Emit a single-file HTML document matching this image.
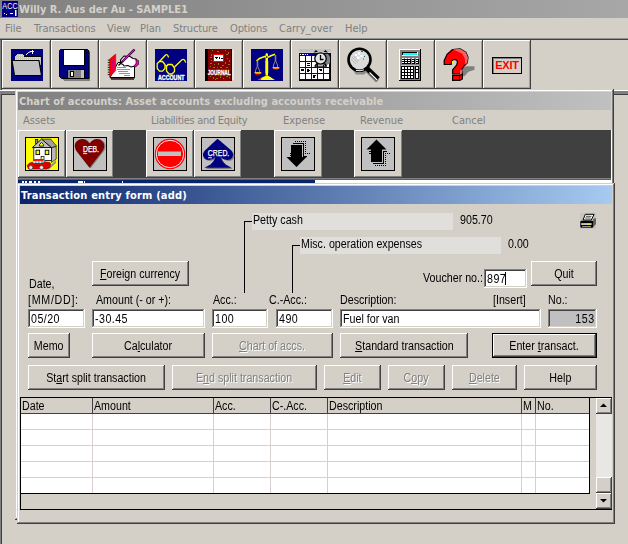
<!DOCTYPE html>
<html><head><meta charset="utf-8"><title>Willy R. Aus der Au - SAMPLE1</title>
<style>
html,body{margin:0;padding:0;}
body{width:628px;height:544px;overflow:hidden;background:#d4d0c8;position:relative;font-family:"Liberation Sans",sans-serif;font-size:12px;color:#000;}
.a{position:absolute;box-sizing:border-box;}
.t{position:absolute;white-space:nowrap;line-height:14px;}
.t.m{transform:scaleX(.89);transform-origin:0 0;}
.c{display:inline-block;transform:scaleX(.89);transform-origin:50% 50%;}
.il{display:inline-block;transform:scaleX(.89);transform-origin:0 50%;}
.tah{font-family:"DejaVu Sans Condensed","Liberation Sans",sans-serif;font-size:11px;}
.btn{position:absolute;box-sizing:border-box;background:#d4d0c8;box-shadow:inset -1px -1px #404040,inset 1px 1px #fff,inset -2px -2px #808080,inset 2px 2px #d4d0c8;text-align:center;white-space:nowrap;}
.btn span.l{position:absolute;left:0;right:0;text-align:center;}
.dis{color:#808080;text-shadow:1px 1px #fff;}
.inp{position:absolute;box-sizing:border-box;background:#fff;box-shadow:inset -1px -1px #fff,inset 1px 1px #808080,inset -2px -2px #d4d0c8,inset 2px 2px #404040;white-space:nowrap;}
.win{position:absolute;box-sizing:border-box;background:#d4d0c8;box-shadow:inset -1px -1px #404040,inset 1px 1px #d4d0c8,inset -2px -2px #808080,inset 2px 2px #fff;}
.tb{position:absolute;box-sizing:border-box;background:#d4d0c8;box-shadow:inset -1px -1px #404040,inset 1px 1px #fff,inset -2px -2px #a0a0a0;}
u{text-decoration:underline;}
</style></head>
<body>
<div class="a" style="left:0px;top:0px;width:628px;height:18px;background:linear-gradient(90deg,#808080,#a7a7a7);"></div>
<svg class="a" style="left:2px;top:1px" width="16" height="16" viewBox="0 0 16 16"><rect width="16" height="16" fill="#000080"/><text x="0.3" y="8" font-family="Liberation Sans,sans-serif" font-size="9.5" fill="#fff" textLength="15.4" lengthAdjust="spacingAndGlyphs">ACC</text><rect x="2" y="12" width="1" height="1" fill="#fff"/><rect x="4" y="13" width="1" height="1" fill="#fff"/><rect x="8" y="12" width="3" height="1" fill="#fff"/><rect x="13" y="9" width="1.5" height="6" fill="#fff"/></svg>
<div class="t tah" style="left:19px;top:3px;color:#d4d0c8;font-weight:bold;letter-spacing:-0.03px;">Willy R. Aus der Au - SAMPLE1</div>
<div class="t tah" style="left:5px;top:22px;color:#808080;">File</div>
<div class="t tah" style="left:34px;top:22px;color:#808080;">Transactions</div>
<div class="t tah" style="left:107px;top:22px;color:#808080;">View</div>
<div class="t tah" style="left:140px;top:22px;color:#808080;">Plan</div>
<div class="t tah" style="left:173px;top:22px;color:#808080;letter-spacing:-0.15px;">Structure</div>
<div class="t tah" style="left:230px;top:22px;color:#808080;letter-spacing:-0.15px;">Options</div>
<div class="t tah" style="left:279px;top:22px;color:#808080;">Carry_over</div>
<div class="t tah" style="left:345px;top:22px;color:#808080;">Help</div>
<div class="a" style="left:0px;top:38px;width:628px;height:1px;background:#909090;"></div>
<div class="a" style="left:0px;top:39px;width:628px;height:1px;background:#404040;"></div>
<div class="a" style="left:0px;top:40px;width:1px;height:50px;background:#808080;"></div>
<div class="a" style="left:1px;top:40px;width:1px;height:50px;background:#404040;"></div>
<div class="tb" style="left:2px;top:40px;width:49px;height:49px;"></div>
<div class="tb" style="left:51px;top:40px;width:48px;height:49px;"></div>
<div class="tb" style="left:99px;top:40px;width:48px;height:49px;"></div>
<div class="tb" style="left:147px;top:40px;width:48px;height:49px;"></div>
<div class="tb" style="left:195px;top:40px;width:48px;height:49px;"></div>
<div class="tb" style="left:243px;top:40px;width:48px;height:49px;"></div>
<div class="tb" style="left:291px;top:40px;width:48px;height:49px;"></div>
<div class="tb" style="left:339px;top:40px;width:48px;height:49px;"></div>
<div class="tb" style="left:387px;top:40px;width:48px;height:49px;"></div>
<div class="tb" style="left:435px;top:40px;width:48px;height:49px;"></div>
<div class="tb" style="left:483px;top:40px;width:48px;height:49px;"></div>
<div class="a" style="left:0px;top:90px;width:628px;height:1px;background:#fff;"></div>
<div class="a" style="left:0px;top:91px;width:628px;height:3px;background:#808080;"></div>
<div class="a" style="left:0px;top:94px;width:628px;height:1px;background:#404040;"></div>
<div class="a" style="left:0px;top:94px;width:1px;height:450px;background:#808080;"></div>
<div class="a" style="left:1px;top:94px;width:1px;height:450px;background:#404040;"></div>
<svg class="a" style="left:11px;top:49px" width="32" height="32" viewBox="0 0 32 32" shape-rendering="crispEdges"><defs><pattern id="yd" width="2" height="2" patternUnits="userSpaceOnUse"><rect width="2" height="2" fill="#c8c8b8"/><rect width="1" height="1" fill="#ffff00"/></pattern></defs><rect width="32" height="32" fill="#000080"/><path d="M4 12V7l2-2h5l2 2h17v9h-2v-5z" fill="url(#yd)"/><path d="M13 7h17v9" fill="none" stroke="#000" stroke-width="1"/><path d="M1 11.5h27l2.5 15h-27z" fill="#c0c0c0" stroke="#000" stroke-width="1.2" shape-rendering="auto"/><path d="M15 6q2-3 5-3.5" fill="none" stroke="#fff" stroke-width="1" shape-rendering="auto"/><path d="M19 2.5h4M21 1v3.5" stroke="#fff" stroke-width="1"/></svg>
<svg class="a" style="left:59px;top:49px" width="33" height="33" viewBox="0 0 33 33" shape-rendering="crispEdges"><path d="M3 3h28v29H5l-2-2z" fill="#808080"/><path d="M1.5 0.500h27l1.500 1.500v27.500h-27.500l-2-2v-26z" fill="#000080" stroke="#000" stroke-width="1" shape-rendering="auto"/><rect x="4" y="0" width="22" height="17" fill="#000"/><rect x="5" y="1" width="20" height="15" fill="#fff"/><rect x="8" y="20" width="18" height="10" fill="#000"/><rect x="9" y="21" width="16" height="8" fill="#808080"/><rect x="11" y="22" width="4" height="6" fill="#000"/><rect x="12" y="23" width="2" height="4" fill="#fff"/><rect x="22" y="21" width="3" height="8" fill="#c0c0c0"/><rect x="27" y="3" width="1" height="2" fill="#000"/></svg>
<svg class="a" style="left:102px;top:46px" width="40" height="38" viewBox="0 0 40 38"><path d="M8 31.500h24.500v-11l-7-4h-9.500z" fill="#fff" stroke="#000" stroke-width="1"/><path d="M9 33.200h23" stroke="#800000" stroke-width="1.200"/><path d="M8.500 31.800h24" stroke="#000" stroke-width="1.600"/><g stroke="#909090" stroke-width="1" shape-rendering="crispEdges"><path d="M15 21.500h9M15 23.500h13M16 25.500h10M17 27.500h11M22 29.500h6"/></g><path d="M7.700 13l6-5v16.500l-6 6.500z" fill="#ff0000" stroke="#c00020" stroke-width="0.600"/><path d="M9.500 14.500l3-2.500v11l-3 3.500z" fill="#c000a0" opacity="0.650"/><g fill="none" stroke="#000" stroke-width="0.900"><path d="M7.800 14.200h-2M7.800 16.600h-2M7.800 19h-2M7.800 21.400h-2M7.800 23.800h-2M7.800 26.200h-2M7.800 28.600h-2"/></g><path d="M18.500 14l3.500-4 6 .5 3 2 3 .5 1 3.500-2 3.500-4 1-3-1.500-4 .5-1-1.500-2.500-1z" fill="#fff" stroke="#000" stroke-width="1.100"/><path d="M34 13.500l2.500 1v4l-3 2.500-2-.5 2.500-3z" fill="#ff00c0" stroke="#000" stroke-width="0.600"/><path d="M32.500 3.500L20 16" stroke="#000" stroke-width="2.400"/><path d="M32.300 3.700L20.500 15.500" stroke="#ff00ff" stroke-width="1.200"/><path d="M20.300 15.700L16.500 19.500" stroke="#000" stroke-width="1.300"/></svg>
<svg class="a" style="left:155px;top:49px" width="32" height="32" viewBox="0 0 32 32"><rect width="32" height="32" fill="#000080"/><g fill="none" stroke="#ffff00" stroke-width="1.300"><path d="M4.500 12.500h3l2.500 3v4l-2.500 2.700h-3l-2.300-2.700v-5z"/><path d="M13 15.500h4l2.500 3.500v3.500l-2.500 2.500h-3l-2.500-3v-4.500z"/><path d="M10 16l1.500 1"/><path d="M4.500 12.500l6-6.500q2-1.500 3 2.500"/><path d="M19.500 18l7.500-7.300q2.500-1.500 3.700 3"/></g><text x="3" y="30.500" font-family="Liberation Sans,sans-serif" font-weight="bold" font-size="7" fill="#fff" stroke="#fff" stroke-width="0.35" textLength="26.500" lengthAdjust="spacingAndGlyphs">ACCOUNT</text></svg>
<svg class="a" style="left:205px;top:49px" width="30" height="32" viewBox="0 0 30 32" shape-rendering="crispEdges"><rect x="27" y="1" width="2" height="30" fill="#e8e8e8"/><rect x="0" y="0" width="27" height="32" fill="#000"/><rect x="3" y="0" width="23" height="32" fill="#800000"/><g fill="#808000"><rect x="7" y="1" width="1" height="1"/><rect x="12" y="2" width="2" height="1"/><rect x="20" y="1" width="1" height="1"/><rect x="23" y="3" width="1" height="2"/><rect x="6" y="5" width="1" height="2"/><rect x="21" y="5" width="2" height="1"/><rect x="5" y="8" width="2" height="1"/><rect x="22" y="9" width="1" height="1"/><rect x="6" y="11" width="1" height="1"/><rect x="24" y="11" width="1" height="2"/><rect x="5" y="14" width="2" height="1"/><rect x="9" y="15" width="1" height="1"/><rect x="13" y="14" width="1" height="2"/><rect x="17" y="16" width="2" height="1"/><rect x="20" y="13" width="1" height="2"/><rect x="23" y="15" width="2" height="1"/><rect x="5" y="17" width="1" height="1"/><rect x="8" y="18" width="2" height="1"/><rect x="12" y="18" width="1" height="1"/><rect x="15" y="18" width="2" height="1"/><rect x="21" y="18" width="2" height="1"/><rect x="5" y="27" width="1" height="1"/><rect x="8" y="28" width="1" height="2"/><rect x="11" y="29" width="2" height="1"/><rect x="15" y="27" width="1" height="2"/><rect x="18" y="29" width="1" height="1"/><rect x="21" y="27" width="2" height="1"/><rect x="24" y="28" width="1" height="1"/><rect x="10" y="30" width="1" height="1"/></g><rect x="8" y="5" width="11" height="8" fill="#ff0000"/><rect x="9" y="6" width="9" height="6" fill="#fff"/><rect x="10" y="8" width="3" height="1" fill="#000"/><rect x="14" y="8" width="1" height="2" fill="#000"/><rect x="11" y="9" width="1" height="1" fill="#000"/><rect x="16" y="9" width="2" height="1" fill="#000"/><text x="2.700" y="26" font-family="Liberation Sans,sans-serif" font-weight="bold" font-size="7.500" fill="#fff" stroke="#fff" stroke-width="0.35" textLength="23" lengthAdjust="spacingAndGlyphs" shape-rendering="auto">JOURNAL</text></svg>
<svg class="a" style="left:251px;top:49px" width="32" height="32" viewBox="0 0 32 32"><rect width="32" height="32" fill="#000080"/><path d="M14.500 5l1.200-1 1.300 1v21.500h-2.500z" fill="#ffff00"/><path d="M14 13h3.500M14 15h3.500M14 17h3.500M14 19h3.500M14 21h3.500M14 23h3.500" stroke="#ffff00" stroke-width="0.900"/><path d="M5.500 12l3-2.500 5-2 4 .5 3-1.500 3.500-1.300" fill="none" stroke="#ffff00" stroke-width="1.500"/><path d="M6.200 11.500v6l-1.700 4v2M6.800 11.500v6l1.700 4v2" fill="none" stroke="#a0a0a0" stroke-width="0.800"/><path d="M24.200 6v6l-1.700 4v2.500M24.800 6v6l1.700 4v2.500" fill="none" stroke="#a0a0a0" stroke-width="0.800"/><path d="M3 23.300h7.500l-2 2.500h-3.500z" fill="#ff0000"/><path d="M3.300 23.300h7v1.200h-6z" fill="#ffff00"/><path d="M21 18.300h7.500l-2 2.500h-3.500z" fill="#ff0000"/><path d="M21.300 18.300h7v1.200h-6z" fill="#ffff00"/><path d="M7 31l4-2.500 4.500-2h1.500l3 2 4 2.500z" fill="#ffff00"/><path d="M7 31l3.500-2-0.500 1.800z" fill="#ff0000"/><path d="M18.500 28l1.500 1.500 1 .3" stroke="#fff" stroke-width="1" fill="none"/><rect x="15.300" y="7" width="1" height="2" fill="#000"/></svg>
<svg class="a" style="left:299px;top:49px" width="33" height="32" viewBox="0 0 33 32" shape-rendering="crispEdges"><rect x="0" y="0" width="32" height="3" fill="#c0c0c0"/><rect x="0" y="4" width="32" height="28" fill="#000"/><rect x="0" y="4" width="31" height="27" fill="#0000a0"/><g fill="#fff"><rect x="1" y="5" width="1" height="1"/><rect x="3" y="5" width="2" height="1"/><rect x="6" y="5" width="1" height="1"/><rect x="8" y="5" width="1" height="1"/><rect x="1" y="7" width="5" height="5"/><rect x="7" y="7" width="5" height="5"/><rect x="13" y="7" width="5" height="5"/><rect x="1" y="13" width="5" height="5"/><rect x="7" y="13" width="5" height="5"/><rect x="13" y="13" width="5" height="5"/><rect x="19" y="13" width="5" height="5"/><rect x="25" y="13" width="5" height="5"/><rect x="1" y="19" width="5" height="5"/><rect x="7" y="19" width="5" height="5"/><rect x="13" y="19" width="5" height="5"/><rect x="19" y="19" width="5" height="5"/><rect x="25" y="19" width="5" height="5"/><rect x="1" y="25" width="5" height="5"/><rect x="7" y="25" width="5" height="5"/><rect x="13" y="25" width="5" height="5"/><rect x="19" y="25" width="5" height="5"/><rect x="25" y="25" width="5" height="5"/></g><g fill="#000"><rect x="8" y="14" width="3" height="1"/><rect x="8" y="16" width="3" height="1"/><rect x="2" y="20" width="3" height="2"/><rect x="8" y="20" width="2" height="3"/><rect x="10" y="21" width="1" height="1"/><rect x="20" y="20" width="3" height="1"/><rect x="21" y="21" width="2" height="1"/><rect x="14" y="26" width="3" height="1"/><rect x="14" y="27" width="2" height="2"/></g><g shape-rendering="auto"><path d="M25 5l4 0 2 3v6l-3 2h-4z" fill="#808080"/><path d="M14.500 3.500l2.500-2.500 2 2zM29 3.500l-2.500-2.500-2 2z" fill="#000"/><path d="M16 17.500l2-3M27.500 17.500l-2-3" stroke="#000" stroke-width="1.500"/><path d="M15.500 17.200h12" stroke="#000" stroke-width="1"/><circle cx="21.500" cy="9.500" r="5.700" fill="#e4e4e4" stroke="#000" stroke-width="1.300"/><path d="M21.500 6v4.500h3" fill="none" stroke="#000" stroke-width="1.300"/><rect x="20.500" y="4" width="1" height="1" fill="#f00"/><rect x="22.500" y="4" width="1" height="1" fill="#f00"/></g></svg>
<svg class="a" style="left:344px;top:46px" width="40" height="38" viewBox="0 0 40 38"><path d="M6 20q7 7.500 16 3l2 2-4 3.500h-8z" fill="#808080" opacity="0.850"/><path d="M23 24.500l10.500 10.500" stroke="#808080" stroke-width="4"/><path d="M21.500 21l12.500 12" stroke="#000" stroke-width="5"/><path d="M25.500 26.500l7.500 7.500" stroke="#fff" stroke-width="1.300"/><circle cx="15.500" cy="13.700" r="11" fill="#dcdcdc" stroke="#000" stroke-width="2.600"/><path d="M8 11l6 6M7 13l5 5M9.500 10l5 5" stroke="#b0b0b0" stroke-width="0.800"/><g fill="#fff"><rect x="11" y="8" width="2" height="2"/><rect x="14" y="6.500" width="2" height="2"/><rect x="13" y="10.500" width="2.500" height="2.500"/><rect x="16.500" y="9" width="2" height="2"/></g><rect x="17" y="5" width="2" height="1" fill="#008080"/><rect x="20" y="10" width="1" height="1" fill="#008080"/><rect x="19" y="12.500" width="1" height="1" fill="#008080"/><path d="M12 24.300q4 1.200 8-.5" stroke="#fff" stroke-width="1" fill="none"/></svg>
<svg class="a" style="left:399px;top:49px" width="23" height="32" viewBox="0 0 23 32" shape-rendering="crispEdges"><rect x="0" y="0" width="22" height="32" fill="#000"/><rect x="0" y="0" width="21" height="31" fill="#fff"/><rect x="1" y="1" width="20" height="30" fill="#808080"/><rect x="3" y="3" width="16" height="4" fill="#fff"/><rect x="3" y="3" width="15" height="3" fill="#000"/><rect x="4" y="4" width="14" height="2" fill="#00ffff"/><g fill="#000"><rect x="3" y="10" width="3" height="5"/><rect x="6" y="10" width="3" height="5"/><rect x="9" y="10" width="3" height="5"/><rect x="13" y="10" width="3" height="5"/><rect x="17" y="10" width="3" height="5"/></g><g fill="#fff"><rect x="3" y="9" width="2" height="1"/><rect x="6" y="9" width="2" height="1"/><rect x="9" y="9" width="2" height="1"/><rect x="13" y="9" width="2" height="1"/><rect x="17" y="9" width="2" height="1"/><rect x="3" y="11" width="2" height="1"/><rect x="6" y="11" width="2" height="1"/><rect x="9" y="11" width="2" height="1"/><rect x="13" y="11" width="2" height="1"/><rect x="17" y="11" width="2" height="1"/><rect x="3" y="13" width="2" height="1"/><rect x="6" y="13" width="2" height="1"/><rect x="9" y="13" width="2" height="1"/><rect x="13" y="13" width="2" height="1"/><rect x="17" y="13" width="2" height="1"/></g><rect x="2" y="16" width="18" height="1" fill="#c0c0c0"/><rect x="2" y="17" width="13" height="13" fill="#000"/><rect x="16" y="17" width="4" height="13" fill="#000"/><g fill="#fff"><rect x="3" y="18" width="2" height="2"/><rect x="6" y="18" width="2" height="2"/><rect x="9" y="18" width="2" height="2"/><rect x="12" y="18" width="2" height="2"/><rect x="3" y="21" width="2" height="2"/><rect x="6" y="21" width="2" height="2"/><rect x="9" y="21" width="2" height="2"/><rect x="12" y="21" width="2" height="2"/><rect x="3" y="24" width="2" height="2"/><rect x="6" y="24" width="2" height="2"/><rect x="9" y="24" width="2" height="2"/><rect x="12" y="24" width="2" height="2"/><rect x="3" y="27" width="2" height="2"/><rect x="6" y="27" width="2" height="2"/><rect x="9" y="27" width="2" height="2"/><rect x="12" y="27" width="2" height="2"/><rect x="17" y="18" width="2" height="2"/><rect x="17" y="21" width="2" height="2"/><rect x="17" y="24" width="2" height="5"/></g></svg>
<svg class="a" style="left:440px;top:46px" width="40" height="38" viewBox="0 0 40 38"><path d="M23.500 21l3-.7h8v3.500l-6 2-4 4.500h-2.500v-5z" fill="#808080"/><path d="M4.200 18.500v-4l2.800-6 5.600-5 7.400-.7 5.900 3.500 2.100 4.900-.7 5.600-3.500 3.500-2.100 3.500.7 3.500-3.500.7h-6.300v-4.200l4.200-4.900.7-3.500-2.100-2.100-2.800.7-1.400 3.500v1z" fill="#ff0000" stroke="#000" stroke-width="1.200" stroke-linejoin="round"/><path d="M12.600 3.500l7.400-.7 5.900 3.500 2.100 4.900-.7 5.600-2 2-.5-6-2.500-5-5-2.500z" fill="#ff8080" opacity="0.750"/><path d="M12.600 29.400h7l2.800-1.400v5l-2.800 1.400h-7z" fill="#ff0000" stroke="#000" stroke-width="1.200" stroke-linejoin="round"/><path d="M19.600 29.400v5" stroke="#000" stroke-width="0.800"/><path d="M20 24.500l2.200-1v4l-2.200 1z" fill="#ff6060"/><rect x="12" y="15" width="1.500" height="2" fill="#ffff00"/></svg>
<div class="a" style="left:492px;top:57px;width:30px;height:17px;border:1px solid #000;box-shadow:inset 1px 1px #808080;"></div>
<div class="t" style="left:492px;top:57px;width:30px;height:17px;line-height:17px;text-align:center;color:#ff0000;font-weight:bold;font-size:11px;letter-spacing:-0.2px;">EXIT</div>

<div class="win" style="left:15px;top:89px;width:599px;height:431px;"></div>
<div class="a" style="left:18px;top:92px;width:593px;height:18px;background:linear-gradient(90deg,#808080,#c0c0c0);"></div>
<div class="t tah" style="left:19px;top:95px;color:#d4d0c8;font-weight:bold;letter-spacing:0.03px;">Chart of accounts: Asset accounts excluding accounts receivable</div>
<div class="t tah" style="left:23px;top:114px;color:#808080;">Assets</div>
<div class="t tah" style="left:151px;top:114px;color:#808080;letter-spacing:-0.3px;">Liabilities and Equity</div>
<div class="t tah" style="left:283px;top:114px;color:#808080;">Expense</div>
<div class="t tah" style="left:360px;top:114px;color:#808080;">Revenue</div>
<div class="t tah" style="left:452px;top:114px;color:#808080;">Cancel</div>
<div class="a" style="left:18px;top:130px;width:593px;height:49px;background:#404040;"></div>
<div class="btn" style="left:18px;top:130px;width:48px;height:48px;"></div>
<div class="btn" style="left:66px;top:130px;width:48px;height:48px;"></div>
<div class="btn" style="left:146px;top:130px;width:48px;height:48px;"></div>
<div class="btn" style="left:194px;top:130px;width:48px;height:48px;"></div>
<div class="btn" style="left:274px;top:130px;width:49px;height:48px;"></div>
<div class="btn" style="left:354px;top:130px;width:49px;height:48px;"></div>
<svg class="a" style="left:25px;top:137px" width="34" height="34" viewBox="0 0 34 34"><rect x="0.500" y="0.500" width="33" height="33" fill="#ffff00" stroke="#000" stroke-width="1" shape-rendering="crispEdges"/><path d="M16.500 2.100h9.200l5.900 7-5.200 1.500z" fill="#a0a0a0" stroke="#000" stroke-width="0.600"/><rect x="10.600" y="2.500" width="2.200" height="4" fill="#909090" stroke="#000" stroke-width="0.700"/><path d="M26.400 11l4.800-1.500v12.500l-4.800 3.500z" fill="#b8b8b8" stroke="#000" stroke-width="0.600"/><rect x="8.800" y="10.600" width="17.600" height="13" fill="#fff" stroke="#000" stroke-width="0.800"/><path d="M16.500 2.100l9.900 8.500h-19.100z" fill="#c0c0c0" stroke="#000" stroke-width="0.900" stroke-linejoin="round"/><path d="M14.500 9.100v-1.500l2-2.200 2 2.200v1.500z" fill="#ffff00" stroke="#000" stroke-width="0.800"/><rect x="11" y="13.200" width="3.600" height="4.400" fill="#ffff00" stroke="#000" stroke-width="0.900"/><rect x="20.200" y="13.200" width="3.600" height="4.400" fill="#ffff00" stroke="#000" stroke-width="0.900"/><rect x="16.100" y="19.400" width="2.900" height="4" fill="#ffffc0" stroke="#000" stroke-width="0.700"/><path d="M20 32.500l8-6.500 3-3v3l-7 6.500z" fill="#909090"/><path d="M2.100 28.500l2.500-2.500 4.500-1 .5-2.500h9l1.500 2.500 4.500.5 1 1.500-1 3.500-3.500 1.500h-17.500z" fill="#e00000" stroke="#800000" stroke-width="0.700"/><path d="M9.600 22.500h9l.7 1.200h-10z" fill="#ff2020"/><path d="M8 25h10l1.500-1.500" stroke="#00ffff" stroke-width="1.600" fill="none"/><path d="M8.500 25h1.500M11.500 25h1.500M14.500 25h1.500" stroke="#fff" stroke-width="1.400"/><circle cx="5.800" cy="30.500" r="2" fill="#e8e8e8" stroke="#404040" stroke-width="0.700"/><circle cx="16.500" cy="30.500" r="2" fill="#e8e8e8" stroke="#404040" stroke-width="0.700"/><path d="M9 28.500h6" stroke="#800000" stroke-width="1"/></svg>
<svg class="a" style="left:73px;top:137px" width="34" height="34" viewBox="0 0 34 34"><rect x="0.500" y="0.500" width="33" height="33" fill="#c0c0c0" stroke="#000" stroke-width="1" shape-rendering="crispEdges"/><path d="M17.500 31.500L4 14q-3-5 0-9 3.500-4.500 9-2.500 3 1.500 4.500 4 1.500-2.500 4.500-4 5.500-2 9 2.500 3 4 0 9z" fill="#808080"/><path d="M16.500 30.800L3 13.500q-2.500-5 0-8.500 3.500-4.500 9-2.500 3 1.500 4.500 4 1.500-2.500 4.500-4 5.500-2 9 2.500 2.500 3.500 0 8.500z" fill="#800000"/><text x="10" y="14.700" font-family="Liberation Sans,sans-serif" font-size="8.200" fill="#fff" stroke="#fff" stroke-width="0.25" textLength="16" lengthAdjust="spacingAndGlyphs">DEB.</text><rect x="10.200" y="16.200" width="4" height="0.900" fill="#fff"/></svg>
<svg class="a" style="left:153px;top:137px" width="34" height="34" viewBox="0 0 34 34"><rect x="0.500" y="0.500" width="33" height="33" fill="#c0c0c0" stroke="#000" stroke-width="1" shape-rendering="crispEdges"/><circle cx="17" cy="17" r="15.200" fill="#ff0000"/><circle cx="17" cy="17" r="13.700" fill="none" stroke="#fff" stroke-width="0.900"/><rect x="5" y="14.500" width="23" height="4.500" fill="#c0c0c0"/></svg>
<svg class="a" style="left:201px;top:137px" width="34" height="34" viewBox="0 0 34 34"><rect x="0.500" y="0.500" width="33" height="33" fill="#c0c0c0" stroke="#000" stroke-width="1" shape-rendering="crispEdges"/><path d="M17.500 2.300L6 12.500q-4 3-3.500 6.500 1 4.500 6 4.500 4-.3 6.500-3-1.500 5-5 7.500l-6 3.300h27l-6-3.300q-3.500-2.500-5-7.500 2.500 2.700 6.500 3 5 0 6-4.500.5-3.500-3.500-6.500z" fill="#808080" transform="translate(0.800,0.600)"/><path d="M16.500 1.800L5.500 12q-4 3-3.500 6.500 1 4.500 6 4.500 4-.3 6.500-3-1.500 5-5 7.500l-6.200 3.300h27.400l-6.200-3.300q-3.500-2.500-5-7.500 2.500 2.700 6.500 3 5 0 6-4.500.5-3.500-3.500-6.500z" fill="#000080"/><text x="6.800" y="19" font-family="Liberation Sans,sans-serif" font-size="8.200" fill="#fff" stroke="#fff" stroke-width="0.25" textLength="21.500" lengthAdjust="spacingAndGlyphs">CRED.</text><rect x="7" y="20.300" width="4" height="0.900" fill="#fff"/></svg>
<svg class="a" style="left:281px;top:137px" width="34" height="34" viewBox="0 0 34 34" shape-rendering="crispEdges"><rect x="0.500" y="0.500" width="33" height="33" fill="#c0c0c0" stroke="#000" stroke-width="1"/><path d="M10 8h11v12h4.500l-10 10-10-10h4.500z" fill="#000" shape-rendering="auto"/><path d="M12 6.500h10.500v12.500h3" fill="none" stroke="#000" stroke-width="1"/><path d="M14 4.500h10.500v12h4.500" fill="none" stroke="#000" stroke-width="1" stroke-dasharray="1 1"/><path d="M8.500 16.500h2M8.500 18.500h2" stroke="#000" stroke-width="1"/></svg>
<svg class="a" style="left:361px;top:137px" width="34" height="34" viewBox="0 0 34 34" shape-rendering="crispEdges"><rect x="0.500" y="0.500" width="33" height="33" fill="#c0c0c0" stroke="#000" stroke-width="1"/><path d="M15.500 2.500l10 10h-4.500v12.500h-11v-12.500h-4.500z" fill="#000" shape-rendering="auto"/><path d="M25.500 14.500h-3v12h-11" fill="none" stroke="#000" stroke-width="1"/><path d="M29 16.500h-4.500v12h-11" fill="none" stroke="#000" stroke-width="1" stroke-dasharray="1 1"/><path d="M7.500 14.500h2.500M7.500 16.500h2.500" stroke="#000" stroke-width="1"/></svg>

<div class="a" style="left:18px;top:178px;width:593px;height:1px;background:#808080;"></div>
<div class="a" style="left:18px;top:179px;width:593px;height:1px;background:#606060;"></div>
<div class="a" style="left:18px;top:180px;width:593px;height:3px;background:#fff;"></div>
<div class="a" style="left:611px;top:130px;width:1px;height:53px;background:#fff;"></div>
<div class="a" style="left:18px;top:180px;width:297px;height:3px;background:#0a246a;"></div>
<div class="a" style="left:22px;top:181px;width:2px;height:2px;background:#fff;"></div>
<div class="a" style="left:25px;top:181px;width:2px;height:2px;background:#fff;"></div>
<div class="a" style="left:29px;top:181px;width:3px;height:2px;background:#fff;"></div>
<div class="a" style="left:34px;top:181px;width:2px;height:2px;background:#fff;"></div>
<div class="a" style="left:38px;top:181px;width:2px;height:2px;background:#fff;"></div>
<div class="a" style="left:78px;top:181px;width:5px;height:2px;background:#fff;"></div>
<div class="a" style="left:84px;top:181px;width:1px;height:2px;background:#fff;"></div>
<div class="a" style="left:122px;top:181px;width:1px;height:2px;background:#fff;"></div>
<div class="win" style="left:17px;top:183px;width:598px;height:341px;"></div>
<div class="a" style="left:20px;top:186px;width:592px;height:18px;background:linear-gradient(90deg,#0a246a,#a6caf0);"></div>
<div class="t tah" style="left:21px;top:189px;color:#fff;font-weight:bold;letter-spacing:0.18px;">Transaction entry form (add)</div>
<div class="a" style="left:252px;top:213px;width:201px;height:17px;background:#e0dfdb;"></div>
<div class="t m" style="left:253px;top:213px;">Petty cash</div>
<div class="a" style="left:300px;top:237px;width:201px;height:17px;background:#e0dfdb;"></div>
<div class="t m" style="left:301px;top:237px;">Misc. operation expenses</div>
<div class="t m" style="left:460px;top:213px;">905.70</div>
<div class="t m" style="left:508px;top:237px;">0.00</div>
<div class="a" style="left:244px;top:221px;width:1px;height:72px;background:#000;"></div>
<div class="a" style="left:244px;top:221px;width:8px;height:1px;background:#000;"></div>
<div class="a" style="left:292px;top:245px;width:1px;height:48px;background:#000;"></div>
<div class="a" style="left:292px;top:245px;width:8px;height:1px;background:#000;"></div>
<svg class="a" style="left:580px;top:213px" width="17" height="16" viewBox="0 0 17 16"><rect width="16" height="16" fill="#c8c6c0"/><path d="M13 6l2.500-1 .5 1v5l-2.500 3z" fill="#606060"/><path d="M5.300 1.300h8.800l-2.800 5.700h-8.300z" fill="#fff" stroke="#000" stroke-width="1"/><path d="M6 3.300h5.500M5.200 5h5.500" stroke="#000" stroke-width="0.700"/><rect x="0.300" y="7.800" width="13" height="7" rx="1.200" fill="#000"/><rect x="1.200" y="10.100" width="10.400" height="1.900" fill="#c8c8c8"/><rect x="7" y="10.700" width="3" height="1.300" fill="#e8e800"/><rect x="2" y="13.200" width="9" height="0.900" fill="#b0b0b0"/></svg>

<div class="btn" style="left:92px;top:261px;width:97px;height:25px;line-height:14px;padding-top:6px;"><span class="c"><u>F</u>oreign currency</span></div>
<div class="btn" style="left:531px;top:261px;width:66px;height:25px;line-height:14px;padding-top:6px;"><span class="c">Quit</span></div>
<div class="t m" style="left:423px;top:271px;">Voucher no.:</div>
<div class="inp" style="left:484px;top:269px;width:43px;height:19px;padding:3px 0 0 3px;line-height:14px;"><span class="il" style="letter-spacing:0.5px">897</span></div>
<div class="a" style="left:505px;top:272px;width:1px;height:13px;background:#000;"></div>
<div class="t m" style="left:29px;top:277px;">Date,</div>
<div class="t m" style="left:28px;top:293px;letter-spacing:0.8px;">[MM/DD]:</div>
<div class="t m" style="left:96px;top:293px;">Amount (- or +):</div>
<div class="t m" style="left:213px;top:293px;">Acc.:</div>
<div class="t m" style="left:269px;top:293px;">C.-Acc.:</div>
<div class="t m" style="left:340px;top:293px;">Description:</div>
<div class="t m" style="left:493px;top:293px;">[Insert]</div>
<div class="t m" style="left:548px;top:293px;">No.:</div>
<div class="inp" style="left:28px;top:309px;width:57px;height:19px;padding:3px 0 0 3px;line-height:14px;"><span class="il" style="transform-origin:0 50%;letter-spacing:0.5px">05/20</span></div>
<div class="inp" style="left:92px;top:309px;width:113px;height:19px;padding:3px 0 0 3px;line-height:14px;"><span class="il" style="transform-origin:0 50%;letter-spacing:0.5px">-30.45</span></div>
<div class="inp" style="left:212px;top:309px;width:56px;height:19px;padding:3px 0 0 3px;line-height:14px;"><span class="il" style="transform-origin:0 50%;letter-spacing:0.5px">100</span></div>
<div class="inp" style="left:276px;top:309px;width:57px;height:19px;padding:3px 0 0 3px;line-height:14px;"><span class="il" style="transform-origin:0 50%;letter-spacing:0.5px">490</span></div>
<div class="inp" style="left:340px;top:309px;width:201px;height:19px;padding:3px 0 0 3px;line-height:14px;"><span class="il" style="transform-origin:0 50%">Fuel for van</span></div>
<div class="inp" style="left:548px;top:309px;width:49px;height:19px;padding:3px 0 0 3px;line-height:14px;background:#c0c0c0;text-align:right;padding-right:2px;"><span class="il" style="transform-origin:100% 50%;letter-spacing:0.5px">153</span></div>
<div class="btn" style="left:28px;top:333px;width:42px;height:25px;line-height:14px;padding-top:6px;"><span class="c">Memo</span></div>
<div class="btn" style="left:92px;top:333px;width:113px;height:25px;line-height:14px;padding-top:6px;"><span class="c">Ca<u>l</u>culator</span></div>
<div class="btn dis" style="left:212px;top:333px;width:121px;height:25px;line-height:14px;padding-top:6px;"><span class="c"><u>C</u>hart of accs.</span></div>
<div class="btn" style="left:340px;top:333px;width:128px;height:25px;line-height:14px;padding-top:6px;"><span class="c"><u>S</u>tandard transaction</span></div>
<div class="a" style="left:492px;top:333px;width:105px;height:25px;background:#000;"></div>
<div class="btn" style="left:493px;top:334px;width:103px;height:23px;line-height:14px;padding-top:5px;"><span class="c">Enter <u>t</u>ransact.</span></div>
<div class="btn" style="left:28px;top:365px;width:137px;height:25px;line-height:14px;padding-top:6px;"><span class="c">St<u>a</u>rt split transaction</span></div>
<div class="btn dis" style="left:172px;top:365px;width:145px;height:25px;line-height:14px;padding-top:6px;"><span class="c">E<u>n</u>d split transaction</span></div>
<div class="btn dis" style="left:324px;top:365px;width:57px;height:25px;line-height:14px;padding-top:6px;"><span class="c"><u>E</u>dit</span></div>
<div class="btn dis" style="left:388px;top:365px;width:57px;height:25px;line-height:14px;padding-top:6px;"><span class="c">C<u>o</u>py</span></div>
<div class="btn dis" style="left:452px;top:365px;width:65px;height:25px;line-height:14px;padding-top:6px;"><span class="c"><u>D</u>elete</span></div>
<div class="btn" style="left:524px;top:365px;width:73px;height:25px;line-height:14px;padding-top:6px;"><span class="c">Help</span></div>
<div class="a" style="left:20px;top:397px;width:592px;height:113px;background:#d4d0c8;border:1px solid #000;border-right:none;"></div>
<div class="a" style="left:21px;top:398px;width:569px;height:16px;background:#d4d0c8;border-bottom:1px solid #404040;"></div>
<div class="a" style="left:21px;top:414px;width:569px;height:80px;background:#fff;border-bottom:1px solid #000;"></div>
<div class="a" style="left:589px;top:398px;width:1px;height:96px;background:#000;"></div>
<div class="a" style="left:21px;top:429px;width:568px;height:1px;background:#d8d0cc;"></div>
<div class="a" style="left:21px;top:445px;width:568px;height:1px;background:#d8d0cc;"></div>
<div class="a" style="left:21px;top:461px;width:568px;height:1px;background:#d8d0cc;"></div>
<div class="a" style="left:21px;top:477px;width:568px;height:1px;background:#d8d0cc;"></div>
<div class="t m" style="left:22px;top:399px;">Date</div>
<div class="t m" style="left:94px;top:399px;">Amount</div>
<div class="a" style="left:92px;top:398px;width:1px;height:16px;background:#404040;"></div>
<div class="a" style="left:92px;top:414px;width:1px;height:79px;background:#d8d0cc;"></div>
<div class="t m" style="left:215px;top:399px;">Acc.</div>
<div class="a" style="left:213px;top:398px;width:1px;height:16px;background:#404040;"></div>
<div class="a" style="left:213px;top:414px;width:1px;height:79px;background:#d8d0cc;"></div>
<div class="t m" style="left:272px;top:399px;">C-.Acc.</div>
<div class="a" style="left:270px;top:398px;width:1px;height:16px;background:#404040;"></div>
<div class="a" style="left:270px;top:414px;width:1px;height:79px;background:#d8d0cc;"></div>
<div class="t m" style="left:329px;top:399px;">Description</div>
<div class="a" style="left:327px;top:398px;width:1px;height:16px;background:#404040;"></div>
<div class="a" style="left:327px;top:414px;width:1px;height:79px;background:#d8d0cc;"></div>
<div class="t m" style="left:523px;top:399px;">M</div>
<div class="a" style="left:521px;top:398px;width:1px;height:16px;background:#404040;"></div>
<div class="a" style="left:521px;top:414px;width:1px;height:79px;background:#d8d0cc;"></div>
<div class="t m" style="left:537px;top:399px;">No.</div>
<div class="a" style="left:535px;top:398px;width:1px;height:16px;background:#404040;"></div>
<div class="a" style="left:535px;top:414px;width:1px;height:79px;background:#d8d0cc;"></div>
<div class="a" style="left:596px;top:398px;width:16px;height:111px;background:#e9e7e3;"></div>
<div class="btn" style="left:596px;top:398px;width:16px;height:16px;"></div>
<div class="btn" style="left:596px;top:477px;width:16px;height:16px;"></div>
<div class="btn" style="left:596px;top:493px;width:16px;height:16px;"></div>
<svg class="a" style="left:596px;top:398px" width="16" height="111"><path d="M4 9h7L7.5 5.5z" fill="#000"/><path d="M4 101h7L7.5 104.5z" fill="#000"/></svg>
</body></html>
